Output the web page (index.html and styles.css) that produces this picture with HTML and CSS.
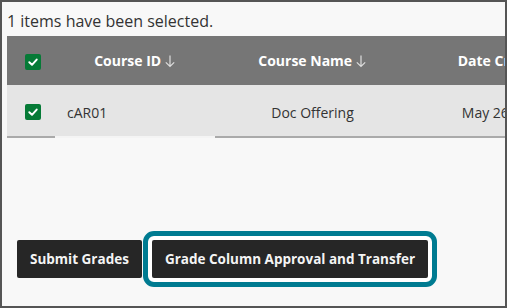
FILE: index.html
```html
<!DOCTYPE html>
<html lang="en">
<head>
  <meta charset="UTF-8"/>
  <meta name="viewport" content="width=device-width, initial-scale=1"/>
  <title>Selected Courses</title>
  <link rel="stylesheet" href="styles.css">
</head>
<body>
  <div class="frame">
    <div class="selected-note">1 items have been selected.</div>
    <div class="table-wrap">
      <table class="course-table">
        <thead>
          <tr>
            <th class="col-check"><span class="check"><svg viewBox="0 0 16 16" width="16" height="16"><path d="M4.3 8.3 L7 10.8 L11.7 5.6" fill="none" stroke="#fff" stroke-width="2" stroke-linecap="round" stroke-linejoin="round"/></svg></span></th>
            <th class="col-id">Course ID <svg class="sort" viewBox="0 0 12 14" width="12" height="14"><path d="M6 1.5 V12.5 M1.8 8.3 L6 12.5 L10.2 8.3" fill="none" stroke="#ddd" stroke-width="1.2"/></svg></th>
            <th class="col-name">Course Name <svg class="sort" viewBox="0 0 12 14" width="12" height="14"><path d="M6 1.5 V12.5 M1.8 8.3 L6 12.5 L10.2 8.3" fill="none" stroke="#ddd" stroke-width="1.2"/></svg></th>
            <th class="col-date head-date">Date Created <svg class="sort" viewBox="0 0 12 14" width="12" height="14"><path d="M6 1.5 V12.5 M1.8 8.3 L6 12.5 L10.2 8.3" fill="none" stroke="#ddd" stroke-width="1.2"/></svg></th>
          </tr>
        </thead>
        <tbody>
          <tr>
            <td class="col-check"><span class="check"><svg viewBox="0 0 16 16" width="16" height="16"><path d="M4.3 8.3 L7 10.8 L11.7 5.6" fill="none" stroke="#fff" stroke-width="2" stroke-linecap="round" stroke-linejoin="round"/></svg></span></td>
            <td class="col-id cell-left">cAR01</td>
            <td class="col-name">Doc Offering</td>
            <td class="col-date">May 26, 2020</td>
          </tr>
        </tbody>
      </table>
    </div>
    <div class="actions">
      <button class="btn-dark" type="button">Submit Grades</button>
      <button class="btn-dark focused" type="button">Grade Column Approval and Transfer</button>
    </div>
  </div>
</body>
</html>
```

FILE: styles.css
```css
* { box-sizing: border-box; }
html, body { margin: 0; padding: 0; }
body { font-family: "Open Sans", "Noto Sans", Arial, sans-serif; background: #f8f8f8; color: #333; }
.frame { width: 507px; height: 308px; border: 2px solid #555; background: #f8f8f8; padding: 8px 0 0 5px; overflow: hidden; }
.selected-note { font-size: 16px; line-height: 22px; color: #333; margin-bottom: 4px; }
.table-wrap { overflow: hidden; width: 498px; }
.course-table { border-collapse: collapse; table-layout: fixed; width: 593px; font-size: 14px; }
.course-table th { background: #767676; color: #fff; font-weight: 700; height: 49px; padding: 0; text-align: center; white-space: nowrap; }
.course-table td { background: #e5e5e5; color: #333; height: 52px; padding: 3px 0 0 0; text-align: center; white-space: nowrap; border-bottom: 2px solid #aaa; }
.course-table td.col-id { border-bottom-color: #f4f4f4; }
.col-check { width: 48px; }
.col-id { width: 160px; }
.col-name { width: 195px; }
.col-date { width: 190px; }
.course-table th.head-date { padding-left: 12px; }
.cell-left { text-align: left !important; padding-left: 12px !important; }
.check { display: inline-block; width: 16px; height: 16px; background: #057a36; border-radius: 2px; vertical-align: middle; margin-left: 4px; }
.course-table td .check { margin-top: -3px; }
.check svg { display: block; }
.sort { vertical-align: -2px; margin-left: -1px; }
.actions { display: flex; align-items: center; gap: 10px; margin-top: 102px; padding-left: 10px; }
.btn-dark { font-family: "Open Sans", "Noto Sans", Arial, sans-serif; font-size: 13.5px; font-weight: 700; color: #f4f4f4; background: #262626; border: none; border-radius: 2px; height: 38px; padding: 0 13px; cursor: pointer; }
.btn-dark.focused { outline: 5px solid #007b91; outline-offset: 4px; box-shadow: 0 0 0 4px #fff; }
```
